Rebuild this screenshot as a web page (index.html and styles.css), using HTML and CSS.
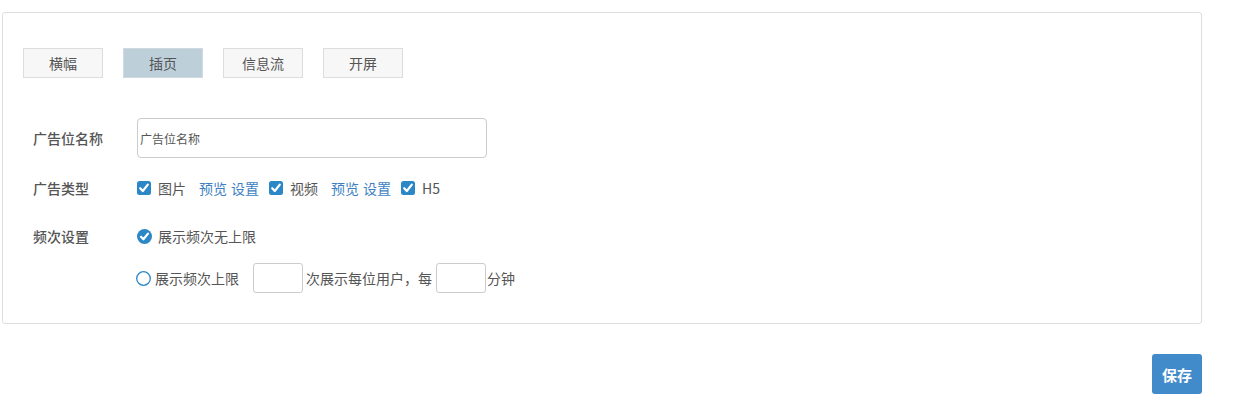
FILE: index.html
```html
<!DOCTYPE html>
<html lang="zh">
<head>
<meta charset="utf-8">
<link rel="stylesheet" href="styles.css">
</head>
<body>
<div class="page">
  <div class="panel">
    <div class="tabs">
      <span class="tab">横幅</span>
      <span class="tab active">插页</span>
      <span class="tab">信息流</span>
      <span class="tab">开屏</span>
    </div>
    <div class="form">
      <div class="row row-name">
        <label class="label">广告位名称</label>
        <div class="field"><input class="text-input" type="text" placeholder="广告位名称"></div>
      </div>
      <div class="row row-type">
        <label class="label">广告类型</label>
        <div class="field inline">
          <span class="check"><svg width="14" height="14" viewBox="0 0 14 14"><rect x="0" y="0" width="14" height="14" rx="2.5" fill="#2b87c6"/><path d="M3.2 7.2 L5.8 10 L10.8 3.6" fill="none" stroke="#fff" stroke-width="2.2" stroke-linecap="round" stroke-linejoin="round"/></svg></span>
          <span class="opt">图片</span>
          <a class="link first">预览</a><a class="link">设置</a>
          <span class="check"><svg width="14" height="14" viewBox="0 0 14 14"><rect x="0" y="0" width="14" height="14" rx="2.5" fill="#2b87c6"/><path d="M3.2 7.2 L5.8 10 L10.8 3.6" fill="none" stroke="#fff" stroke-width="2.2" stroke-linecap="round" stroke-linejoin="round"/></svg></span>
          <span class="opt">视频</span>
          <a class="link first">预览</a><a class="link">设置</a>
          <span class="check"><svg width="14" height="14" viewBox="0 0 14 14"><rect x="0" y="0" width="14" height="14" rx="2.5" fill="#2b87c6"/><path d="M3.2 7.2 L5.8 10 L10.8 3.6" fill="none" stroke="#fff" stroke-width="2.2" stroke-linecap="round" stroke-linejoin="round"/></svg></span>
          <span class="opt">H5</span>
        </div>
      </div>
      <div class="row row-freq">
        <label class="label">频次设置</label>
        <div class="field inline">
          <span class="radio"><svg width="15" height="15" viewBox="0 0 15 15"><circle cx="7.5" cy="7.5" r="7.5" fill="#2b87c6"/><path d="M4 7.8 L6.4 10.3 L11 4.6" fill="none" stroke="#fff" stroke-width="2.2" stroke-linecap="round" stroke-linejoin="round"/></svg></span>
          <span class="opt">展示频次无上限</span>
        </div>
      </div>
      <div class="row row-limit">
        <span class="label"></span>
        <div class="field inline shift">
          <span class="radio"><svg width="15" height="15" viewBox="0 0 15 15"><circle cx="7.5" cy="7.5" r="6.8" fill="#fff" stroke="#2b87c6" stroke-width="1.3"/></svg></span>
          <span class="opt narrow">展示频次上限</span>
          <input class="small-input first" type="text">
          <span class="opt tight">次展示每位用户，每</span>
          <input class="small-input" type="text">
          <span class="opt flush">分钟</span>
        </div>
      </div>
    </div>
  </div>
  <div class="actions">
    <button class="save">保存</button>
  </div>
</div>
</body>
</html>
```
FILE: styles.css
```css
html, body {
  margin: 0;
  padding: 0;
  background: #fff;
}
body {
  font-family: "Noto Sans CJK SC", "Noto Sans", sans-serif;
  font-size: 14px;
  color: #555;
}
.page {
  padding: 12px 0 0 2px;
  width: 1200px;
}
.panel {
  box-sizing: border-box;
  width: 1200px;
  height: 312px;
  border: 1px solid #ddd;
  border-radius: 3px;
  padding: 35px 20px 0 20px;
}
.tabs {
  display: flex;
  gap: 20px;
}
.tab {
  box-sizing: border-box;
  width: 80px;
  height: 30px;
  display: flex;
  align-items: center;
  justify-content: center;
  background: #f7f7f7;
  border: 1px solid #ddd;
  font-size: 14px;
  color: #555;
}
.tab.active {
  background: #bdd0da;
  border-color: #cfd9df;
}
.form {
  padding-left: 10px;
  margin-top: 40px;
}
.row {
  display: flex;
  align-items: center;
}
.label {
  width: 104px;
  flex: none;
  font-weight: 500;
  color: #555;
}
.row-name { height: 40px; }
.row-type { height: 20px; margin-top: 20px; }
.row-freq { height: 20px; margin-top: 28px; }
.row-limit { height: 30px; margin-top: 17px; }
.field.inline {
  display: flex;
  align-items: center;
}
.field.shift { margin-left: -1px; }
.text-input {
  box-sizing: border-box;
  width: 350px;
  height: 40px;
  border: 1px solid #ccc;
  border-radius: 4px;
  padding: 0 2px;
  font-family: inherit;
  font-size: 12px;
  color: #555;
  outline: none;
}
.text-input::placeholder {
  color: #555;
}
.check, .radio {
  display: flex;
  width: 15px;
  height: 15px;
  align-items: center;
}
.opt {
  margin-left: 6px;
  color: #555;
}
.opt.narrow { margin-left: 4px; }
.opt.tight { margin-left: 3px; }
.opt.flush { margin-left: 1px; }
.link {
  color: #3d7fc2;
  margin-left: 4px;
}
.link.first { margin-left: 13px; }
.link + .check { margin-left: 10px; }
.small-input {
  box-sizing: border-box;
  width: 50px;
  height: 30px;
  border: 1px solid #ccc;
  border-radius: 3px;
  margin-left: 4px;
  outline: none;
}
.small-input.first { margin-left: 14px; }
.actions {
  display: flex;
  justify-content: flex-end;
  margin-top: 30px;
}
.save {
  width: 50px;
  height: 40px;
  border: none;
  border-radius: 3px;
  background: #428bca;
  color: #fff;
  font-family: inherit;
  font-size: 15px;
  font-weight: bold;
  padding: 0;
}
```
